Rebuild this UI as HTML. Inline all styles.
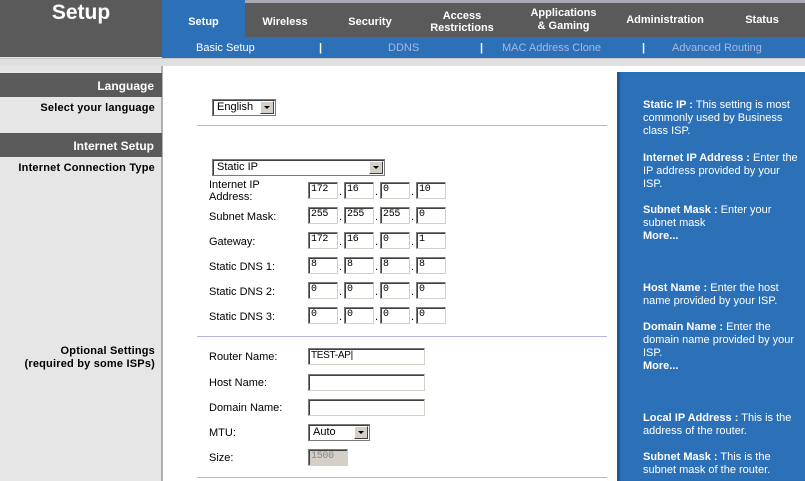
<!DOCTYPE html>
<html><head><style>
*{margin:0;padding:0;box-sizing:border-box}
body{width:805px;height:481px;overflow:hidden;background:#e6e6e6;font-family:"Liberation Sans",Arial,sans-serif;font-size:11px;position:relative}
.a{position:absolute}
.tab{position:absolute;top:3px;height:37px;color:#fff;font-weight:bold;font-size:11px;text-align:center;display:flex;align-items:center;justify-content:center;line-height:12px}
.sub{position:absolute;top:42px;color:#a9b8e0;font-size:11px}
.sub.w{color:#fff}
.lbl{position:absolute;right:650px;font-weight:bold;color:#000;text-align:right;white-space:nowrap;letter-spacing:0.2px}
.bar{position:absolute;left:0;width:162px;height:24px;background:#5a5a5a;color:#fff;font-weight:bold;font-size:12px;text-align:right;padding-right:8px;line-height:26px}
.inp{position:absolute;height:17px;width:30px;border:1px solid #7a7a7a;border-right-color:#d4d0c8;border-bottom-color:#d4d0c8;box-shadow:inset 1px 1px 0 #404040;background:#fff;font-family:"Liberation Mono",monospace;font-size:10px;padding-left:2px;line-height:14px;letter-spacing:-0.3px}
.dot{position:absolute;font-size:11px}
.fl{position:absolute;left:209px;font-size:11px}
.sel{position:absolute;height:17px;border:1px solid #7a7a7a;box-shadow:inset 1px 1px 0 #404040;background:#fff;font-size:11px;padding-left:4px;line-height:14px}
.sel i{position:absolute;right:1px;top:1px;width:14px;height:13px;background:#d4d0c8;border:1px solid;border-color:#fff #404040 #404040 #fff}
.sel i:after{content:"";position:absolute;left:3px;top:4px;border:3px solid transparent;border-top:3px solid #000}
.hr{position:absolute;left:197px;width:410px;height:1px;background:#b8b4d8}
.help{position:absolute;left:643px;width:158px;color:#fff;font-size:11px;line-height:13px}
.help b{font-weight:bold}
</style></head><body>
<div class="a" style="left:0;top:0;width:805px;height:57px;background:#5a5a5a"></div>
<div class="a" style="left:245px;top:0;width:560px;height:3px;background:#a8a8b0"></div>
<div class="a" style="left:0;top:1px;width:162px;color:#fff;font-weight:bold;font-size:21px;text-align:center;line-height:24px">Setup</div>
<div class="a" style="left:162px;top:0;width:83px;height:37px;background:#2c70b8"></div>
<div class="a" style="left:162px;top:37px;width:643px;height:21px;background:#2c70b8"></div>
<div class="tab" style="left:162px;width:83px">Setup</div>
<div class="tab" style="left:245px;width:80px">Wireless</div>
<div class="tab" style="left:330px;width:80px">Security</div>
<div class="tab" style="left:418px;width:88px">Access<br>Restrictions</div>
<div class="tab" style="left:516px;width:95px;line-height:13px;top:1px">Applications<br>&amp; Gaming</div>
<div class="tab" style="left:615px;width:100px;top:1px">Administration</div>
<div class="tab" style="left:730px;width:64px;top:1px">Status</div>
<div class="sub w" style="left:196px">Basic Setup</div>
<div class="sub w" style="left:319px;font-weight:bold">|</div>
<div class="sub" style="left:388px">DDNS</div>
<div class="sub w" style="left:480px;font-weight:bold">|</div>
<div class="sub" style="left:502px">MAC Address Clone</div>
<div class="sub w" style="left:642px;font-weight:bold">|</div>
<div class="sub" style="left:672px">Advanced Routing</div>
<div class="a" style="left:0;top:58px;width:805px;height:8px;background:#e0e0e0;border-top:1px solid #c8c8c8"></div>
<div class="a" style="left:161px;top:66px;width:2px;height:415px;background:#b0b0b0"></div>
<div class="a" style="left:163px;top:66px;width:454px;height:415px;background:#fff"></div>
<div class="a" style="left:617px;top:66px;width:188px;height:6px;background:#fff"></div>
<div class="a" style="left:617px;top:72px;width:188px;height:409px;background:#2c70b8;box-shadow:inset 4px 0 3px -2px #1a4a80"></div>

<div class="bar" style="top:73px">Language</div>
<div class="lbl" style="top:102px">Select your language</div>
<div class="bar" style="top:133px">Internet Setup</div>
<div class="lbl" style="top:162px">Internet Connection Type</div>
<div class="lbl" style="top:345px;line-height:13px">Optional Settings<br>(required by some ISPs)</div>

<div class="sel" style="left:212px;top:99px;width:64px">English<i></i></div>
<div class="hr" style="top:125px"></div>
<div class="sel" style="left:212px;top:159px;width:173px">Static IP<i></i></div>

<div class="fl" style="top:179px;line-height:12px">Internet IP<br>Address:</div>
<div class="fl" style="top:211px">Subnet Mask:</div>
<div class="fl" style="top:236px">Gateway:</div>
<div class="fl" style="top:261px">Static DNS 1:</div>
<div class="fl" style="top:286px">Static DNS 2:</div>
<div class="fl" style="top:311px">Static DNS 3:</div>

<div class="inp" style="left:308px;top:182px">172</div><div class="dot" style="left:339px;top:186px">.</div><div class="inp" style="left:344px;top:182px">16</div><div class="dot" style="left:375px;top:186px">.</div><div class="inp" style="left:380px;top:182px">0</div><div class="dot" style="left:411px;top:186px">.</div><div class="inp" style="left:416px;top:182px">10</div>
<div class="inp" style="left:308px;top:207px">255</div><div class="dot" style="left:339px;top:211px">.</div><div class="inp" style="left:344px;top:207px">255</div><div class="dot" style="left:375px;top:211px">.</div><div class="inp" style="left:380px;top:207px">255</div><div class="dot" style="left:411px;top:211px">.</div><div class="inp" style="left:416px;top:207px">0</div>
<div class="inp" style="left:308px;top:232px">172</div><div class="dot" style="left:339px;top:236px">.</div><div class="inp" style="left:344px;top:232px">16</div><div class="dot" style="left:375px;top:236px">.</div><div class="inp" style="left:380px;top:232px">0</div><div class="dot" style="left:411px;top:236px">.</div><div class="inp" style="left:416px;top:232px">1</div>
<div class="inp" style="left:308px;top:257px">8</div><div class="dot" style="left:339px;top:261px">.</div><div class="inp" style="left:344px;top:257px">8</div><div class="dot" style="left:375px;top:261px">.</div><div class="inp" style="left:380px;top:257px">8</div><div class="dot" style="left:411px;top:261px">.</div><div class="inp" style="left:416px;top:257px">8</div>
<div class="inp" style="left:308px;top:282px">0</div><div class="dot" style="left:339px;top:286px">.</div><div class="inp" style="left:344px;top:282px">0</div><div class="dot" style="left:375px;top:286px">.</div><div class="inp" style="left:380px;top:282px">0</div><div class="dot" style="left:411px;top:286px">.</div><div class="inp" style="left:416px;top:282px">0</div>
<div class="inp" style="left:308px;top:307px">0</div><div class="dot" style="left:339px;top:311px">.</div><div class="inp" style="left:344px;top:307px">0</div><div class="dot" style="left:375px;top:311px">.</div><div class="inp" style="left:380px;top:307px">0</div><div class="dot" style="left:411px;top:311px">.</div><div class="inp" style="left:416px;top:307px">0</div>

<div class="hr" style="top:336px"></div>
<div class="fl" style="top:351px">Router Name:</div>
<div class="fl" style="top:377px">Host Name:</div>
<div class="fl" style="top:402px">Domain Name:</div>
<div class="fl" style="top:427px">MTU:</div>
<div class="fl" style="top:452px">Size:</div>
<div class="inp" style="left:308px;top:348px;width:117px;font-family:'Liberation Sans',sans-serif;font-size:10px;padding-left:2px">TEST-AP|</div>
<div class="inp" style="left:308px;top:374px;width:117px"></div>
<div class="inp" style="left:308px;top:399px;width:117px"></div>
<div class="sel" style="left:308px;top:424px;width:62px">Auto<i></i></div>
<div class="inp" style="left:308px;top:449px;width:40px;background:#d4d0c8;color:#888">1500</div>
<div class="hr" style="top:477px"></div>

<div class="help" style="top:99px"><b>Static IP :</b> This setting is most commonly used by Business class ISP.</div>
<div class="help" style="top:152px"><b>Internet IP Address :</b> Enter the IP address provided by your ISP.</div>
<div class="help" style="top:204px"><b>Subnet Mask :</b> Enter your subnet mask<br><b>More...</b></div>
<div class="help" style="top:282px"><b>Host Name :</b> Enter the host name provided by your ISP.</div>
<div class="help" style="top:321px"><b>Domain Name :</b> Enter the domain name provided by your ISP.<br><b>More...</b></div>
<div class="help" style="top:412px"><b>Local IP Address :</b> This is the address of the router.</div>
<div class="help" style="top:451px"><b>Subnet Mask :</b> This is the subnet mask of the router.</div>
</body></html>
